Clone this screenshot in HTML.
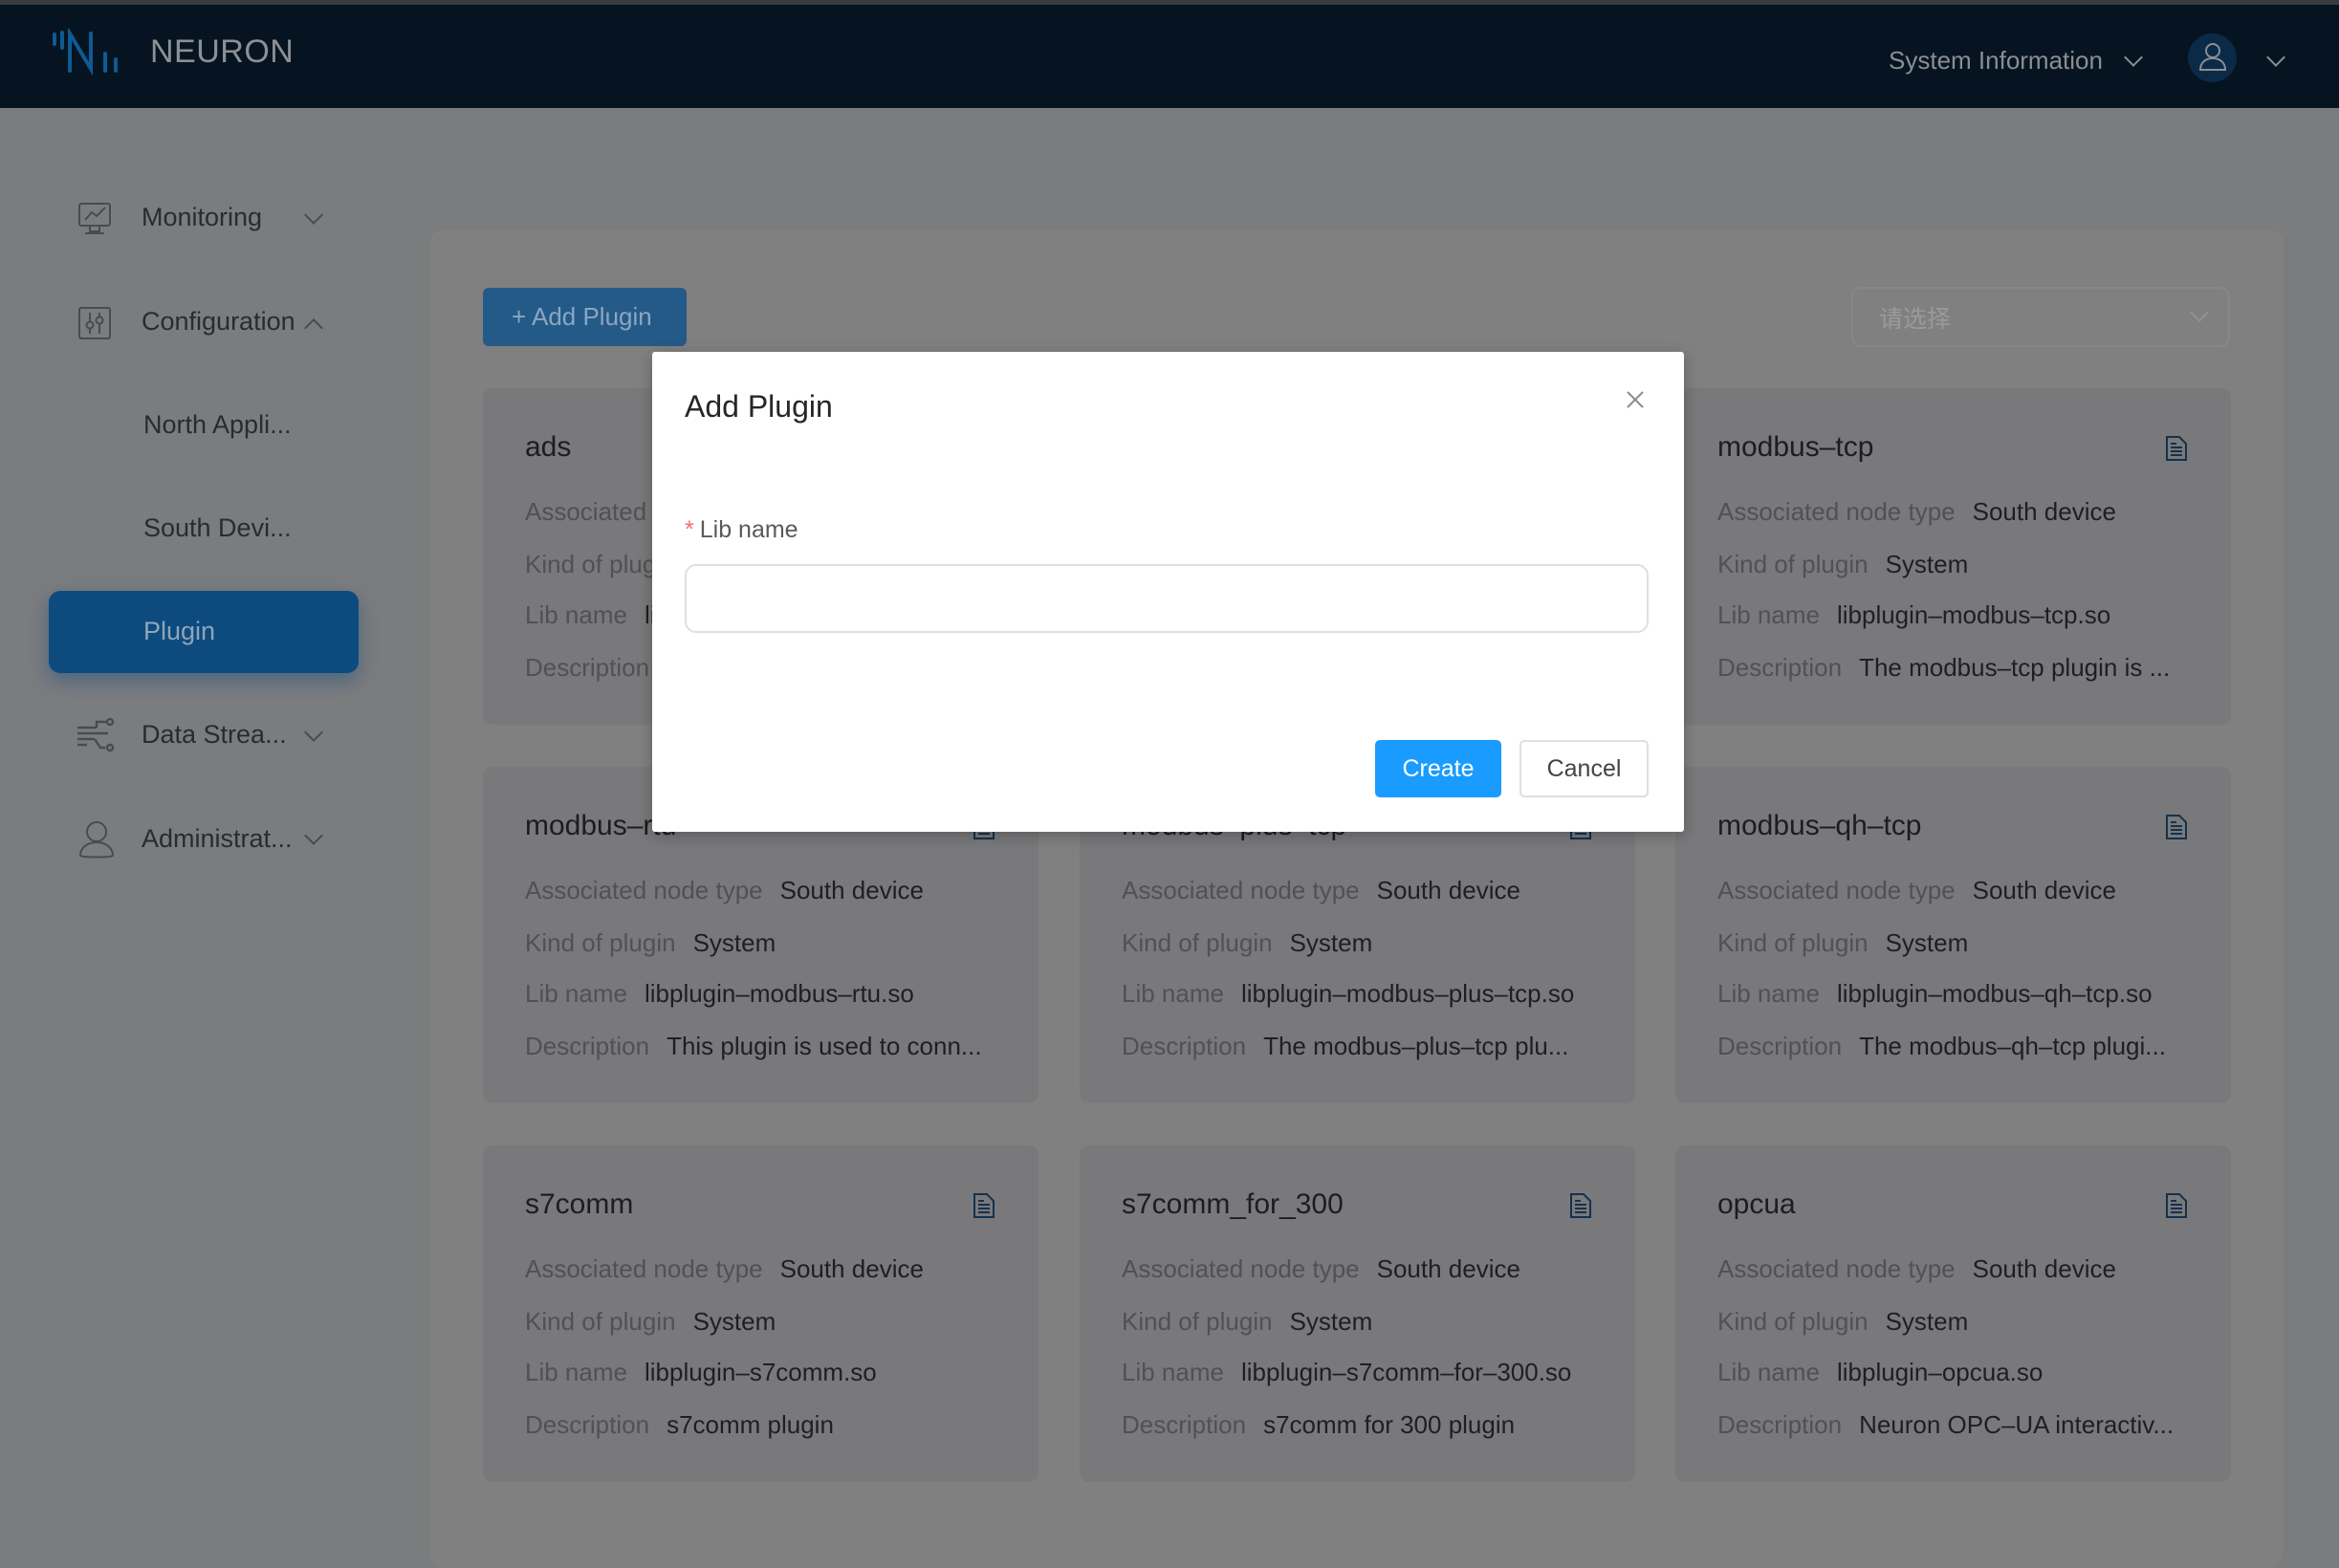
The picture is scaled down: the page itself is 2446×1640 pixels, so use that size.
<!DOCTYPE html>
<html><head><meta charset="utf-8"><style>
*{margin:0;padding:0;box-sizing:border-box}
body{width:2446px;height:1576px;overflow:hidden;background:#7b7c7e;font-family:"Liberation Sans","Noto Sans CJK SC",sans-serif;position:relative}
.a{position:absolute}
.hdr{left:0;top:0;width:2446px;height:113px;background:#051420;border-top:5px solid #3a3c3f}
.side{font-size:27px;color:#2a2b2d;white-space:nowrap}
.chev{width:14px;height:14px;border-right:2px solid #4a4b4d;border-bottom:2px solid #4a4b4d;transform:rotate(45deg)}
.panel{left:449px;top:240px;width:1939px;height:1400px;background:#808080;border-radius:16px}
.card{width:581px;height:352px;background:#79797b;border-radius:10px}
.card .t{position:absolute;left:44px;top:42px;font-size:30px;color:#1c1d1f;line-height:40px}
.card .f{position:absolute;left:44px;font-size:26px;line-height:34px;white-space:nowrap;color:#1e1f21}
.card .f span{color:#505153;margin-right:18px}
.card svg{position:absolute;right:45px;top:50px}
</style></head><body>
<div class="a hdr"></div>
<svg class="a" style="left:54px;top:30px" width="86" height="50" viewBox="0 0 86 50">
<g stroke="#0e5a94" stroke-width="4" stroke-linecap="round" fill="none">
<line x1="3" y1="6" x2="3" y2="16"/><line x1="11" y1="4" x2="11" y2="20"/>
<polyline points="19,44 19,5 41,42 41,5"/>
<line x1="56" y1="26" x2="56" y2="44"/><line x1="67" y1="32" x2="67" y2="44"/>
</g></svg>
<div class="a" style="left:157px;top:35px;font-size:34px;color:#8c9095;letter-spacing:0.5px">NEURON</div>
<div class="a" style="left:1975px;top:48px;font-size:26px;color:#8a8e93">System Information</div>
<div class="a chev" style="left:2224px;top:53px;border-color:#8a8e93"></div>
<div class="a" style="left:2288px;top:35px;width:51px;height:51px;border-radius:50%;background:#0b2a47"></div>
<svg class="a" style="left:2296px;top:42px" width="36" height="36" viewBox="0 0 36 36" fill="none" stroke="#8a8e93" stroke-width="2"><circle cx="18" cy="11" r="7"/><path d="M5 31c0-8 6-12 13-12s13 4 13 12z"/></svg>
<div class="a chev" style="left:2373px;top:53px;border-color:#8a8e93"></div>

<svg class="a" style="left:82px;top:212px" width="36" height="34" viewBox="0 0 36 34" fill="none" stroke="#4a4b4d" stroke-width="2"><rect x="1" y="1" width="32" height="23" rx="2"/><path d="M7 18l7-8 5 4 9-9"/><path d="M12 24v6h10v-6M7 32h20"/></svg>
<div class="a side" style="left:148px;top:212px">Monitoring</div>
<div class="a chev" style="left:321px;top:218px"></div>
<svg class="a" style="left:82px;top:321px" width="34" height="34" viewBox="0 0 34 34" fill="none" stroke="#4a4b4d" stroke-width="2"><rect x="1" y="1" width="32" height="32" rx="2"/><path d="M12 6v22M22 6v22"/><circle cx="12" cy="19" r="3.5" fill="#7b7c7e"/><circle cx="22" cy="14" r="3.5" fill="#7b7c7e"/></svg>
<div class="a side" style="left:148px;top:321px">Configuration</div>
<div class="a chev" style="left:321px;top:336px;transform:rotate(225deg)"></div>
<div class="a side" style="left:150px;top:429px">North Appli...</div>
<div class="a side" style="left:150px;top:537px">South Devi...</div>
<div class="a" style="left:51px;top:618px;width:324px;height:86px;border-radius:12px;background:#0d4b7f;box-shadow:0 8px 20px rgba(13,75,127,.45)"></div>
<div class="a side" style="left:150px;top:645px;color:#8fa5b9">Plugin</div>
<svg class="a" style="left:80px;top:751px" width="40" height="38" viewBox="0 0 40 38" fill="none" stroke="#4a4b4d" stroke-width="2.4"><path d="M1 10h20M1 16h24M1 22h18M1 28h10"/><path d="M21 10V4h11M25 16h8M19 22l6 9h5"/><circle cx="35" cy="4" r="3"/><circle cx="35" cy="31" r="3"/></svg>
<div class="a side" style="left:148px;top:753px">Data Strea...</div>
<div class="a chev" style="left:321px;top:759px"></div>
<svg class="a" style="left:82px;top:858px" width="38" height="40" viewBox="0 0 38 40" fill="none" stroke="#4a4b4d" stroke-width="2"><circle cx="19" cy="12" r="10"/><path d="M2 37c0-9 8-14 17-14s17 5 17 14c0 2-34 2-34 0z"/></svg>
<div class="a side" style="left:148px;top:862px">Administrat...</div>
<div class="a chev" style="left:321px;top:867px"></div>

<div class="a panel"></div>
<div class="a" style="left:505px;top:301px;width:213px;height:61px;border-radius:6px;background:#245a88;color:#8ba6c0;font-size:26px;line-height:61px;padding-left:30px">+ Add Plugin</div>
<div class="a" style="left:1936px;top:300px;width:396px;height:63px;border-radius:10px;border:2px solid #878787"></div>
<div class="a" style="left:1965px;top:314px;font-size:25px;color:#9a9a9a">请选择</div>
<div class="a chev" style="left:2293px;top:320px;border-color:#929292"></div>

<div class="a card" style="left:505px;top:406px"><div class="t">ads</div><div class="f" style="top:112px"><span>Associated node type</span>South device</div><div class="f" style="top:167px"><span>Kind of plugin</span>System</div><div class="f" style="top:220px"><span>Lib name</span>libplugin-ads.so</div><div class="f" style="top:275px"><span>Description</span>ads plugin</div></div>
<div class="a card" style="left:1129px;top:406px"></div>
<div class="a card" style="left:1752px;top:406px"><div class="t">modbus–tcp</div><svg width="24" height="26" viewBox="0 0 24 26" fill="none" stroke="#14314d" stroke-width="2"><path d="M2 1h13l7 7v17H2z"/><path d="M6 12h12M6 16h12M6 20h12M6 8h6"/></svg><div class="f" style="top:112px"><span>Associated node type</span>South device</div><div class="f" style="top:167px"><span>Kind of plugin</span>System</div><div class="f" style="top:220px"><span>Lib name</span>libplugin–modbus–tcp.so</div><div class="f" style="top:275px"><span>Description</span>The modbus–tcp plugin is ...</div></div>

<div class="a card" style="left:505px;top:802px"><div class="t">modbus–rtu</div><svg width="24" height="26" viewBox="0 0 24 26" fill="none" stroke="#14314d" stroke-width="2"><path d="M2 1h13l7 7v17H2z"/><path d="M6 12h12M6 16h12M6 20h12M6 8h6"/></svg><div class="f" style="top:112px"><span>Associated node type</span>South device</div><div class="f" style="top:167px"><span>Kind of plugin</span>System</div><div class="f" style="top:220px"><span>Lib name</span>libplugin–modbus–rtu.so</div><div class="f" style="top:275px"><span>Description</span>This plugin is used to conn...</div></div>
<div class="a card" style="left:1129px;top:802px"><div class="t">modbus–plus–tcp</div><svg width="24" height="26" viewBox="0 0 24 26" fill="none" stroke="#14314d" stroke-width="2"><path d="M2 1h13l7 7v17H2z"/><path d="M6 12h12M6 16h12M6 20h12M6 8h6"/></svg><div class="f" style="top:112px"><span>Associated node type</span>South device</div><div class="f" style="top:167px"><span>Kind of plugin</span>System</div><div class="f" style="top:220px"><span>Lib name</span>libplugin–modbus–plus–tcp.so</div><div class="f" style="top:275px"><span>Description</span>The modbus–plus–tcp plu...</div></div>
<div class="a card" style="left:1752px;top:802px"><div class="t">modbus–qh–tcp</div><svg width="24" height="26" viewBox="0 0 24 26" fill="none" stroke="#14314d" stroke-width="2"><path d="M2 1h13l7 7v17H2z"/><path d="M6 12h12M6 16h12M6 20h12M6 8h6"/></svg><div class="f" style="top:112px"><span>Associated node type</span>South device</div><div class="f" style="top:167px"><span>Kind of plugin</span>System</div><div class="f" style="top:220px"><span>Lib name</span>libplugin–modbus–qh–tcp.so</div><div class="f" style="top:275px"><span>Description</span>The modbus–qh–tcp plugi...</div></div>

<div class="a card" style="left:505px;top:1198px"><div class="t">s7comm</div><svg width="24" height="26" viewBox="0 0 24 26" fill="none" stroke="#14314d" stroke-width="2"><path d="M2 1h13l7 7v17H2z"/><path d="M6 12h12M6 16h12M6 20h12M6 8h6"/></svg><div class="f" style="top:112px"><span>Associated node type</span>South device</div><div class="f" style="top:167px"><span>Kind of plugin</span>System</div><div class="f" style="top:220px"><span>Lib name</span>libplugin–s7comm.so</div><div class="f" style="top:275px"><span>Description</span>s7comm plugin</div></div>
<div class="a card" style="left:1129px;top:1198px"><div class="t">s7comm_for_300</div><svg width="24" height="26" viewBox="0 0 24 26" fill="none" stroke="#14314d" stroke-width="2"><path d="M2 1h13l7 7v17H2z"/><path d="M6 12h12M6 16h12M6 20h12M6 8h6"/></svg><div class="f" style="top:112px"><span>Associated node type</span>South device</div><div class="f" style="top:167px"><span>Kind of plugin</span>System</div><div class="f" style="top:220px"><span>Lib name</span>libplugin–s7comm–for–300.so</div><div class="f" style="top:275px"><span>Description</span>s7comm for 300 plugin</div></div>
<div class="a card" style="left:1752px;top:1198px"><div class="t">opcua</div><svg width="24" height="26" viewBox="0 0 24 26" fill="none" stroke="#14314d" stroke-width="2"><path d="M2 1h13l7 7v17H2z"/><path d="M6 12h12M6 16h12M6 20h12M6 8h6"/></svg><div class="f" style="top:112px"><span>Associated node type</span>South device</div><div class="f" style="top:167px"><span>Kind of plugin</span>System</div><div class="f" style="top:220px"><span>Lib name</span>libplugin–opcua.so</div><div class="f" style="top:275px"><span>Description</span>Neuron OPC–UA interactiv...</div></div>

<div class="a" style="left:682px;top:368px;width:1079px;height:502px;background:#fff;border-radius:3px;box-shadow:0 4px 16px rgba(0,0,0,.25)"></div>
<div class="a" style="left:716px;top:407px;font-size:32px;color:#262626">Add Plugin</div>
<svg class="a" style="left:1700px;top:408px" width="20" height="20" viewBox="0 0 20 20" stroke="#8c8c8c" stroke-width="2"><path d="M2 2l16 16M18 2L2 18"/></svg>
<div class="a" style="left:716px;top:540px;font-size:25px;color:#5a5a5a"><span style="color:#f56c6c;margin-right:6px">*</span>Lib name</div>
<div class="a" style="left:716px;top:590px;width:1008px;height:72px;border:2px solid #dcdfe6;border-radius:12px"></div>
<div class="a" style="left:1438px;top:774px;width:132px;height:60px;background:#1a9bff;border-radius:5px;color:#fff;font-size:25px;line-height:60px;text-align:center">Create</div>
<div class="a" style="left:1589px;top:774px;width:135px;height:60px;border:2px solid #dcdfe6;border-radius:5px;color:#444;font-size:25px;line-height:56px;text-align:center">Cancel</div>
</body></html>
